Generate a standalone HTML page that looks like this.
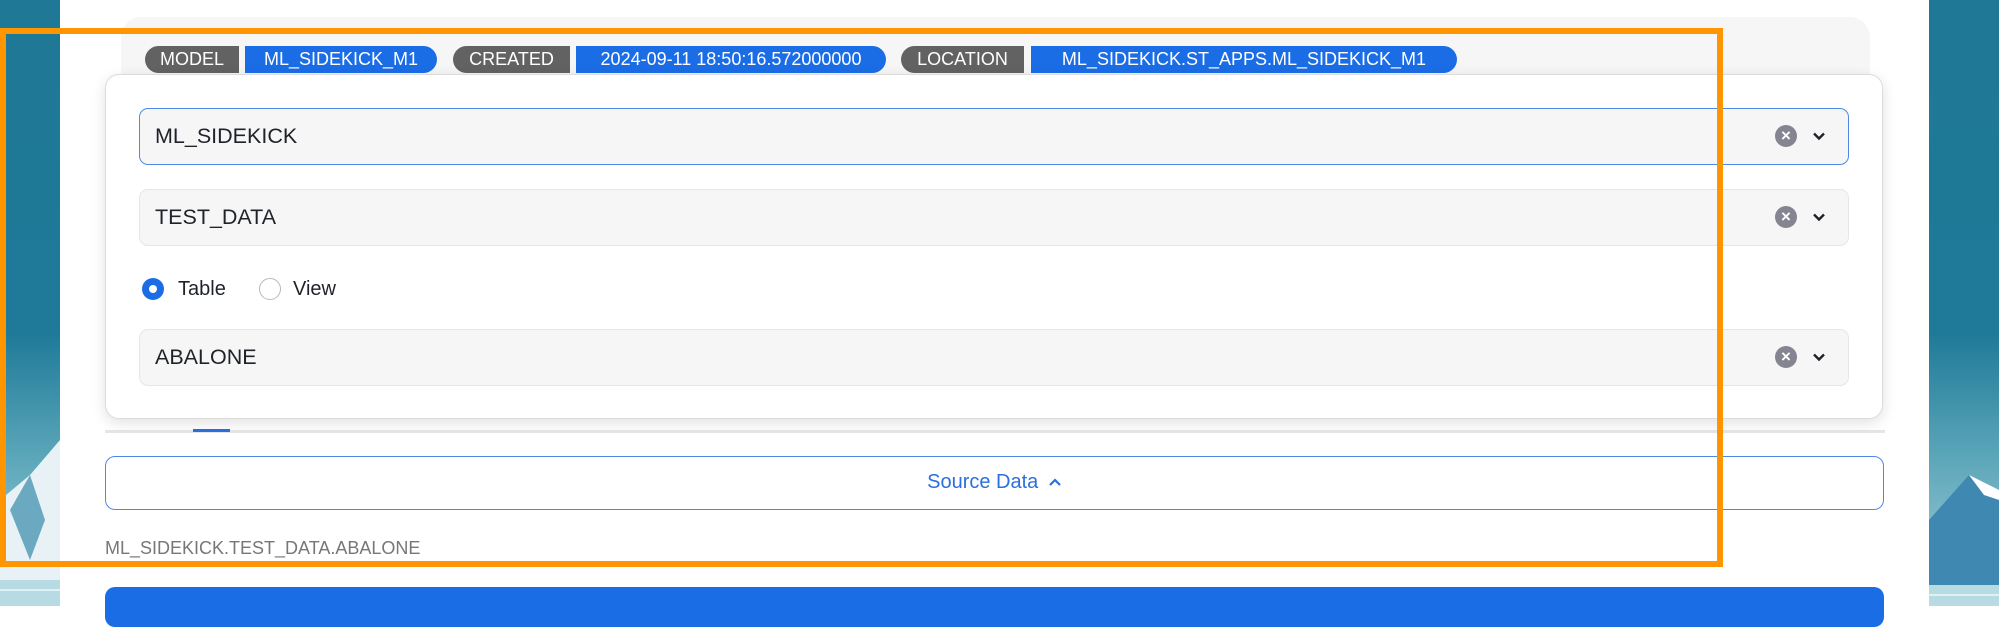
<!DOCTYPE html>
<html><head><meta charset="utf-8">
<style>
*{box-sizing:border-box;margin:0;padding:0}
body{width:1999px;height:606px;overflow:hidden;background:#fff;font-family:"Liberation Sans",Arial,sans-serif;position:relative}
.strip{position:absolute;top:0;height:606px;background:linear-gradient(#1f7896 0%,#1e7a98 55%,#5aa5b8 75%,#a9d3dd 100%);overflow:hidden}
.abs{position:absolute}
.hdr{left:121px;top:17px;width:1749px;height:120px;background:#f6f6f6;border-radius:20px}
.tag{position:absolute;top:46px;height:27px;color:#fff;font-size:18px;line-height:27px;text-align:center;white-space:nowrap}
.g{background:#626262;border-radius:14px 0 0 14px}
.b{background:#1b6de6;border-radius:0 14px 14px 0}
.pop{left:105px;top:74px;width:1778px;height:345px;background:#fff;border:1px solid #dcdcdc;border-radius:14px;box-shadow:0 4px 14px rgba(0,0,0,.12)}
.sel{position:absolute;left:139px;width:1710px;height:57px;background:#f6f6f7;border:1.5px solid #e4e6ea;border-radius:9px;font-size:21.5px;color:#1f2329;line-height:54px;padding-left:15px}
.sel.f{border-color:#4d8ae8}
.clr{position:absolute;right:51px;top:16px;width:22px;height:22px;border-radius:50%;background:#858591;color:#fff;font-size:17px;line-height:21px;text-align:center;font-weight:bold}
.chev{position:absolute;right:22px;top:20px;width:14px;height:14px}
.radio{position:absolute;top:278px;width:22px;height:22px;border-radius:50%}
.lbl{position:absolute;top:277px;font-size:20px;color:#1f2329;line-height:24px}
</style></head><body>
<div class="strip" style="left:0;width:60px">
<svg width="60" height="606" style="position:absolute;left:0;top:0"><polygon points="0,500 30,475 60,440 60,580 0,580" fill="#e8f2f6"/><polygon points="10,510 30,475 45,520 30,560" fill="#6aa9c0"/><polygon points="0,580 60,580 60,606 0,606" fill="#b7dbe3"/><line x1="0" y1="590" x2="60" y2="590" stroke="#e0f0f4" stroke-width="2"/></svg>
</div>
<div class="strip" style="left:1929px;width:70px">
<svg width="70" height="606" style="position:absolute;left:0;top:0"><polygon points="0,520 40,475 70,500 70,585 0,585" fill="#3f88b2"/><polygon points="40,475 70,490 70,500 55,495" fill="#fff"/><polygon points="0,585 70,585 70,606 0,606" fill="#b7dbe3"/><line x1="0" y1="595" x2="70" y2="595" stroke="#e0f0f4" stroke-width="2"/></svg>
</div>
<div class="abs hdr"></div>
<div class="tag g" style="left:145px;width:94px">MODEL</div>
<div class="tag b" style="left:245px;width:192px">ML_SIDEKICK_M1</div>
<div class="tag g" style="left:453px;width:117px">CREATED</div>
<div class="tag b" style="left:576px;width:310px">2024-09-11 18:50:16.572000000</div>
<div class="tag g" style="left:901px;width:123px">LOCATION</div>
<div class="tag b" style="left:1031px;width:426px">ML_SIDEKICK.ST_APPS.ML_SIDEKICK_M1</div>
<div class="abs" style="left:105px;top:430px;width:1780px;height:3px;background:#e6e6e6"></div>
<div class="abs" style="left:193px;top:429px;width:37px;height:3px;background:#2b6fe0"></div>
<div class="abs pop"></div>
<div class="sel f" style="top:108px">ML_SIDEKICK<div class="clr">×</div><svg class="chev" viewBox="0 0 14 14"><path d="M2 4.5L7 9.5L12 4.5" fill="none" stroke="#1f2329" stroke-width="2.4"/></svg></div>
<div class="sel" style="top:189px">TEST_DATA<div class="clr">×</div><svg class="chev" viewBox="0 0 14 14"><path d="M2 4.5L7 9.5L12 4.5" fill="none" stroke="#1f2329" stroke-width="2.4"/></svg></div>
<div class="radio" style="left:142px;background:#1b6de6"><div style="position:absolute;left:7px;top:7px;width:8px;height:8px;border-radius:50%;background:#fff"></div></div>
<div class="lbl" style="left:178px">Table</div>
<div class="radio" style="left:259px;border:1.5px solid #b8b8b8"></div>
<div class="lbl" style="left:293px">View</div>
<div class="sel" style="top:329px">ABALONE<div class="clr">×</div><svg class="chev" viewBox="0 0 14 14"><path d="M2 4.5L7 9.5L12 4.5" fill="none" stroke="#1f2329" stroke-width="2.4"/></svg></div>
<div class="abs" style="left:105px;top:456px;width:1779px;height:54px;border:1.5px solid #4d8ae8;border-radius:10px;text-align:center;line-height:50px;font-size:20px;color:#2b6fe0">Source Data <svg width="14" height="14" viewBox="0 0 14 14" style="vertical-align:-1px;margin-left:4px"><path d="M2 10L7 5L12 10" fill="none" stroke="#2b6fe0" stroke-width="2.2"/></svg></div>
<div class="abs" style="left:105px;top:537px;font-size:18px;color:#777;line-height:22px">ML_SIDEKICK.TEST_DATA.ABALONE</div>
<div class="abs" style="left:105px;top:587px;width:1779px;height:40px;background:#1b6de6;border-radius:10px"></div>
<div class="abs" style="left:0;top:28px;width:1723px;height:539px;border:6.5px solid #ff9500"></div>
</body></html>
